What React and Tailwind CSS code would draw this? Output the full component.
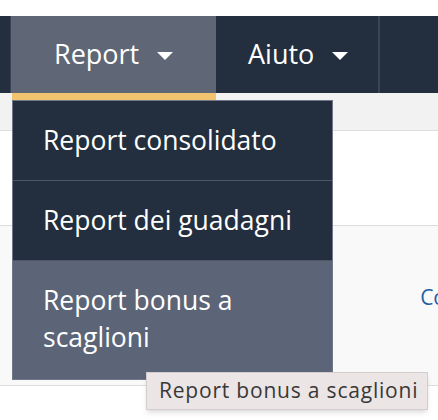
const ember = { fontFamily: '"Open Sans", "Noto Sans", sans-serif' };

function Caret() {
  return (
    <svg width="16" height="8" viewBox="0 0 16 8" className="ml-[18px] mt-[2px]">
      <path d="M0 0H16L8 8Z" fill="#ffffff" />
    </svg>
  );
}

function MenuItem({ children, active, last }) {
  return (
    <div
      className={`px-[30px] pt-[21px] text-[26.5px] leading-[37px] text-white ${
        active ? "bg-[#5c6477] pb-[23px]" : "bg-[#232f3e] pb-[21px]"
      } ${last ? "" : "border-b border-[#4d5766]"}`}
    >
      {children}
    </div>
  );
}

export default function App() {
  return (
    <div
      className="relative w-[438px] h-[420px] overflow-hidden bg-white"
      style={ember}
    >
      <div className="h-[16px] bg-white" />

      <nav className="h-[77px] bg-[#232f3e] flex">
        <div className="w-[11px] border-r border-[#3a4452]" />
        <button className="w-[205px] h-full bg-[#5f6675] flex items-center pl-[43px] text-[27px] text-white">
          Report
          <Caret />
        </button>
        <button className="w-[164px] h-full flex items-center pl-[32px] text-[27px] text-white border-r-2 border-[#3a4452]">
          Aiuto
          <Caret />
        </button>
        <div className="flex-1" />
      </nav>

      <div className="h-[38px] bg-[#f2f2f2] border-b border-[#dedede]">
        <div className="ml-[12px] w-[204px] h-[7px] bg-[#f2c46f]" />
      </div>

      <div className="h-[95px] bg-white border-b border-[#dcdcdc]" />

      <div className="h-[160px] bg-[#f9f9f9] border-b border-[#dcdcdc] flex items-center justify-end">
        <a className="text-[21px] text-[#1f5fa6] mr-[-8px] mt-[-16px] whitespace-nowrap">Co</a>
      </div>

      <div className="absolute left-[12px] top-[100px] w-[321px] border border-[#6f7886] bg-[#232f3e]">
        <MenuItem>Report consolidato</MenuItem>
        <MenuItem>Report dei guadagni</MenuItem>
        <MenuItem active last>
          Report bonus a
          <br />
          scaglioni
        </MenuItem>
      </div>

      <div className="absolute left-[146px] top-[372px] w-[282px] h-[38px] bg-[#ece5e5] border border-[#d3cdcd] shadow-md flex items-center pl-[12px] text-[21px] tracking-[0.8px] text-[#383838]">
        Report bonus a scaglioni
      </div>
    </div>
  );
}
